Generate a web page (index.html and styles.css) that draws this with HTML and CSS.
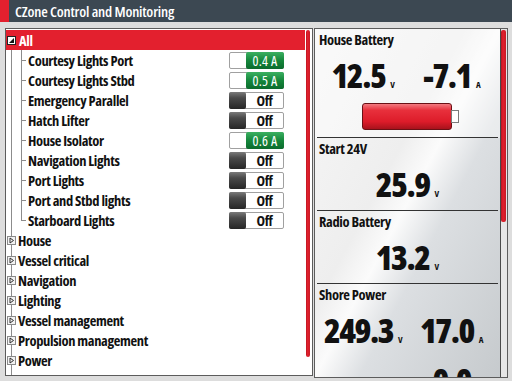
FILE: index.html
```html
<!DOCTYPE html>
<html lang="en">
<head>
    <meta charset="UTF-8">
    <meta name="viewport" content="width=device-width, initial-scale=1.0">
    <title>CZone Control and Monitoring</title>
    <link rel="stylesheet" href="styles.css">
</head>
<body>

<div class="titlebar">
    <div class="titlebar-accent"></div>
    <div class="titlebar-text">CZone Control and Monitoring</div>
</div>

<div class="main">
    <div class="list-panel">
        <div class="tree">
            <div class="row row-open">
                <svg class="tree-icon" width="9" height="9" viewBox="0 0 9 9">
                    <rect x="0.5" y="0.5" width="8" height="8" fill="#fff" stroke="#222"/>
                    <polygon points="7,2 7,7 2,7" fill="#111"/>
                </svg>
                <span class="row-name">All</span>
            </div>
            <div class="children">
                <div class="row child">
                    <span class="row-name">Courtesy Lights Port</span>
                    <span class="switch on"><span class="switch-blank"></span><span class="switch-reading">0.4 A</span></span>
                </div>
                <div class="row child">
                    <span class="row-name">Courtesy Lights Stbd</span>
                    <span class="switch on"><span class="switch-blank"></span><span class="switch-reading">0.5 A</span></span>
                </div>
                <div class="row child">
                    <span class="row-name">Emergency Parallel</span>
                    <span class="switch"><span class="switch-knob"></span><span class="switch-label">Off</span></span>
                </div>
                <div class="row child">
                    <span class="row-name">Hatch Lifter</span>
                    <span class="switch"><span class="switch-knob"></span><span class="switch-label">Off</span></span>
                </div>
                <div class="row child">
                    <span class="row-name">House Isolator</span>
                    <span class="switch on"><span class="switch-blank"></span><span class="switch-reading">0.6 A</span></span>
                </div>
                <div class="row child">
                    <span class="row-name">Navigation Lights</span>
                    <span class="switch"><span class="switch-knob"></span><span class="switch-label">Off</span></span>
                </div>
                <div class="row child">
                    <span class="row-name">Port Lights</span>
                    <span class="switch"><span class="switch-knob"></span><span class="switch-label">Off</span></span>
                </div>
                <div class="row child">
                    <span class="row-name">Port and Stbd lights</span>
                    <span class="switch"><span class="switch-knob"></span><span class="switch-label">Off</span></span>
                </div>
                <div class="row child">
                    <span class="row-name">Starboard Lights</span>
                    <span class="switch"><span class="switch-knob"></span><span class="switch-label">Off</span></span>
                </div>
            </div>
            <div class="row group">
                <svg class="tree-icon" width="9" height="9" viewBox="0 0 9 9">
                    <rect x="0.5" y="0.5" width="8" height="8" fill="#f2f2f2" stroke="#8a8a8a"/>
                    <polygon points="3,2 6.5,4.5 3,7" fill="none" stroke="#333"/>
                </svg>
                <span class="row-name">House</span>
            </div>
            <div class="row group">
                <svg class="tree-icon" width="9" height="9" viewBox="0 0 9 9">
                    <rect x="0.5" y="0.5" width="8" height="8" fill="#f2f2f2" stroke="#8a8a8a"/>
                    <polygon points="3,2 6.5,4.5 3,7" fill="none" stroke="#333"/>
                </svg>
                <span class="row-name">Vessel critical</span>
            </div>
            <div class="row group">
                <svg class="tree-icon" width="9" height="9" viewBox="0 0 9 9">
                    <rect x="0.5" y="0.5" width="8" height="8" fill="#f2f2f2" stroke="#8a8a8a"/>
                    <polygon points="3,2 6.5,4.5 3,7" fill="none" stroke="#333"/>
                </svg>
                <span class="row-name">Navigation</span>
            </div>
            <div class="row group">
                <svg class="tree-icon" width="9" height="9" viewBox="0 0 9 9">
                    <rect x="0.5" y="0.5" width="8" height="8" fill="#f2f2f2" stroke="#8a8a8a"/>
                    <polygon points="3,2 6.5,4.5 3,7" fill="none" stroke="#333"/>
                </svg>
                <span class="row-name">Lighting</span>
            </div>
            <div class="row group">
                <svg class="tree-icon" width="9" height="9" viewBox="0 0 9 9">
                    <rect x="0.5" y="0.5" width="8" height="8" fill="#f2f2f2" stroke="#8a8a8a"/>
                    <polygon points="3,2 6.5,4.5 3,7" fill="none" stroke="#333"/>
                </svg>
                <span class="row-name">Vessel management</span>
            </div>
            <div class="row group">
                <svg class="tree-icon" width="9" height="9" viewBox="0 0 9 9">
                    <rect x="0.5" y="0.5" width="8" height="8" fill="#f2f2f2" stroke="#8a8a8a"/>
                    <polygon points="3,2 6.5,4.5 3,7" fill="none" stroke="#333"/>
                </svg>
                <span class="row-name">Propulsion management</span>
            </div>
            <div class="row group">
                <svg class="tree-icon" width="9" height="9" viewBox="0 0 9 9">
                    <rect x="0.5" y="0.5" width="8" height="8" fill="#f2f2f2" stroke="#8a8a8a"/>
                    <polygon points="3,2 6.5,4.5 3,7" fill="none" stroke="#333"/>
                </svg>
                <span class="row-name">Power</span>
            </div>
            <div class="row group">
                <svg class="tree-icon" width="9" height="9" viewBox="0 0 9 9">
                    <rect x="0.5" y="0.5" width="8" height="8" fill="#f2f2f2" stroke="#8a8a8a"/>
                    <polygon points="3,2 6.5,4.5 3,7" fill="none" stroke="#333"/>
                </svg>
                <span class="row-name">Other</span>
            </div>
        </div>
        <div class="scroll">
            <div class="scroll-thumb list-thumb"></div>
        </div>
    </div>

    <div class="gauges-panel">
        <div class="gauges">
            <div class="gauge gauge-house">
                <div class="gauge-title">House Battery</div>
                <div class="gauge-values">
                    <div class="reading"><span class="reading-num">12.5</span><span class="reading-unit">V</span></div>
                    <div class="reading"><span class="reading-num">-7.1</span><span class="reading-unit">A</span></div>
                </div>
                <div class="battery">
                    <div class="battery-body"></div>
                    <div class="battery-tip"></div>
                </div>
            </div>
            <div class="gauge">
                <div class="gauge-title">Start 24V</div>
                <div class="gauge-values">
                    <div class="reading"><span class="reading-num">25.9</span><span class="reading-unit">V</span></div>
                </div>
            </div>
            <div class="gauge gauge-radio">
                <div class="gauge-title">Radio Battery</div>
                <div class="gauge-values">
                    <div class="reading"><span class="reading-num">13.2</span><span class="reading-unit">V</span></div>
                </div>
            </div>
            <div class="gauge gauge-shore">
                <div class="gauge-title">Shore Power</div>
                <div class="gauge-values">
                    <div class="reading"><span class="reading-num">249.3</span><span class="reading-unit">V</span></div>
                    <div class="reading"><span class="reading-num">17.0</span><span class="reading-unit">A</span></div>
                </div>
                <div class="gauge-values second">
                    <div class="reading"></div>
                    <div class="reading"><span class="reading-num">0.0</span></div>
                </div>
            </div>
        </div>
        <div class="scroll gauge-scroll">
            <div class="scroll-thumb gauge-thumb"></div>
        </div>
    </div>
</div>

</body>
</html>
```
FILE: styles.css
```css
body {
    margin: 0;
    width: 512px;
    height: 381px;
    overflow: hidden;
    background: #dddddd;
    font-family: "Open Sans", sans-serif;
    font-stretch: 75%;
    color: #111;
}
.titlebar {
    display: flex;
    height: 22px;
    background: #3c4852;
}
.titlebar-accent {
    width: 9px;
    background: #e3202e;
}
.titlebar-text {
    padding-left: 6px;
    color: #fff;
    font-size: 15px;
    font-weight: 600;
    letter-spacing: -0.2px;
    line-height: 22px;
}
.main {
    display: flex;
    gap: 1px;
    padding: 6px 0 0 5px;
}

/* left list */
.list-panel {
    display: flex;
    width: 308px;
    height: 348px;
    border: 1px solid #5c5c5c;
    box-sizing: border-box;
    background: #fff;
}
.tree {
    flex: 1;
    padding-top: 1px;
    overflow: hidden;
    background: linear-gradient(#8c8c8c, #8c8c8c) 5px 15px / 1px 100% no-repeat;
}
.row {
    display: flex;
    align-items: center;
    height: 20px;
    font-size: 14.5px;
    font-weight: 750;
    letter-spacing: -0.35px;
    white-space: nowrap;
}
.row-open {
    background: #e3202e;
    color: #fff;
}
.tree-icon {
    flex: none;
    margin: 0 2px 0 1px;
}
.row-open .row-name {
    margin-left: 1px;
}
.children {
    margin-left: 15px;
}
.child {
    position: relative;
    padding: 0 21px 0 7px;
}
.child::before {
    content: "";
    position: absolute;
    left: 0;
    top: 0;
    bottom: 0;
    width: 1px;
    background: #8c8c8c;
}
.child:last-child::before {
    bottom: 50%;
}
.child::after {
    content: "";
    position: absolute;
    left: 0;
    top: 50%;
    width: 5px;
    height: 1px;
    background: #8c8c8c;
}
.switch {
    display: flex;
    width: 55px;
    height: 17px;
    margin-left: auto;
    border: 1px solid #a0a0a0;
    border-radius: 2px;
    box-sizing: border-box;
    background: #fff;
}
.switch-knob {
    width: 17px;
    height: 17px;
    margin: -1px 0 0 -1px;
    border-radius: 2px;
    background: linear-gradient(#7a7a7a 0%, #4a4a4a 35%, #262626 100%);
}
.switch-label {
    flex: 1;
    text-align: center;
    font-size: 14.5px;
    line-height: 15px;
}
.switch-blank {
    width: 16px;
}
.switch-reading {
    flex: 1;
    margin: -1px -1px -1px 0;
    border-radius: 2px;
    background: linear-gradient(#3bb061 0%, #16873c 50%, #0b6b2c 100%);
    color: #fff;
    text-align: center;
    font-size: 14px;
    font-weight: 500;
    line-height: 17px;
    letter-spacing: 0.2px;
}
.scroll {
    width: 7px;
    flex: none;
}
.scroll-thumb {
    border-radius: 2px;
    background: linear-gradient(90deg, #b8161f, #e3202e 40%, #c81a25);
}
.list-thumb {
    width: 4px;
    height: 327px;
    margin: 1px 0 0 1px;
}

/* right gauges */
.gauges-panel {
    display: flex;
    width: 194px;
    height: 350px;
    border: 1px solid #5c5c5c;
    box-sizing: border-box;
    background: #e6e6e6;
}
.gauges {
    width: 185px;
    flex: none;
    border-right: 1px solid #4a4a4a;
    overflow: hidden;
    background: linear-gradient(118deg, #f7f7f7 0%, #eeeeee 40%, #fbfbfb 50%, #dcdfe2 62%, #c6cacd 100%);
}
.gauge {
    height: 73px;
    padding: 3px 4px 0;
    box-sizing: border-box;
    background: linear-gradient(#333, #333) center bottom / calc(100% - 4px) 1px no-repeat;
}
.gauge-house {
    height: 109px;
    background-color: rgba(255, 255, 255, 0.4);
}
.gauge-shore {
    height: 200px;
    background: none;
}
.gauge-title {
    font-size: 14.5px;
    font-weight: 750;
    letter-spacing: -0.35px;
    line-height: 16px;
}
.gauge-values {
    display: flex;
    justify-content: center;
    margin-top: 10px;
}
.gauge-values.second {
    margin-top: 15px;
}
.reading {
    flex: 1;
    text-align: center;
    white-space: nowrap;
}
.reading-num {
    font-size: 34px;
    font-weight: 800;
    letter-spacing: -1.5px;
    line-height: 34px;
}
.reading-unit {
    margin-left: 5px;
    font-size: 9px;
    font-weight: 700;
}
.battery {
    display: flex;
    align-items: center;
    justify-content: center;
    margin-top: 10px;
    padding-left: 6px;
}
.battery-body {
    width: 90px;
    height: 27px;
    border: 1px solid #6a1015;
    border-radius: 3px;
    box-sizing: border-box;
    background: linear-gradient(#f27a80 0%, #e8303c 25%, #dd1c2a 70%, #a8121c 100%);
}
.battery-tip {
    width: 8px;
    height: 13px;
    margin-left: -1px;
    border: 1px solid #7a7a7a;
    box-sizing: border-box;
    background: #fff;
}
.gauge-thumb {
    width: 5px;
    height: 192px;
    margin-top: 1px;
}
```
